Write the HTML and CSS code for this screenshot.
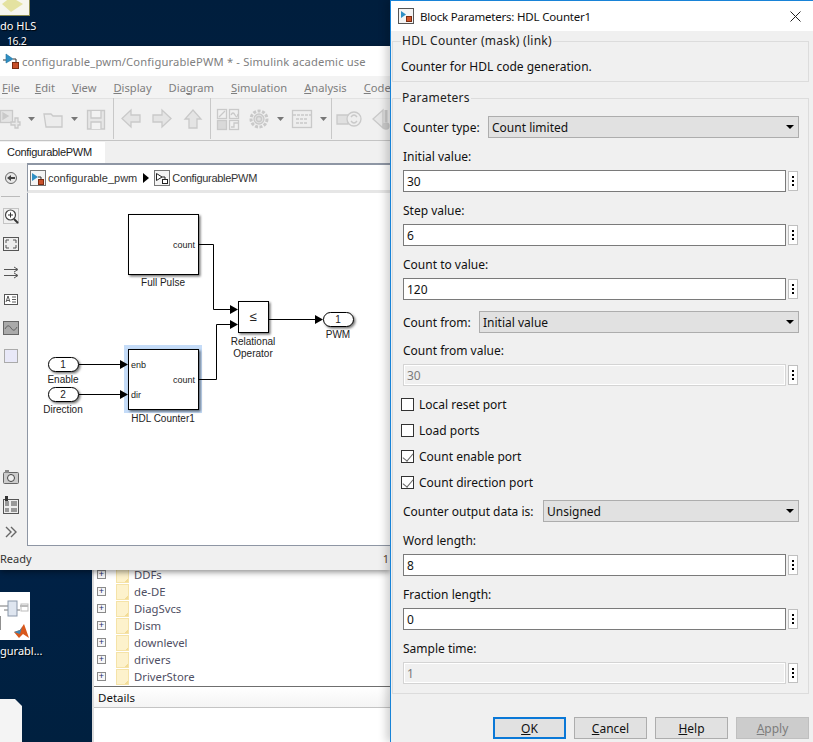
FILE: index.html
```html
<!DOCTYPE html>
<html lang="en">
<head>
<meta charset="utf-8">
<title>Block Parameters: HDL Counter1</title>
<link rel="stylesheet" href="styles.css">
</head>
<body>
<main class="desktop">
  <div class="desk-top-icon">
    <svg width="29" height="15" viewBox="0 0 29 15">
      <rect width="29" height="15" fill="#f6f6ee"/>
      <path d="M2 4L11 -3L23 4L11 12Z" fill="#e4e2a0"/>
    </svg>
  </div>
  <div class="desk-label desk-label-a">do HLS</div>
  <div class="desk-label desk-label-b">16.2</div>

  <div class="desk-file">
    <svg width="30" height="48" viewBox="0 0 30 48">
      <rect width="30" height="48" fill="#fff"/>
      <path d="M0 14H8M20 14H28M4 18H20" stroke="#777" fill="none"/>
      <rect x="8" y="9" width="9" height="15" fill="#dfe6f0" stroke="#8a97aa"/>
      <rect x="21" y="12" width="7" height="7" fill="none" stroke="#bbb"/>
      <path d="M0 24V38" stroke="#222" stroke-width="1"/>
      <path d="M14 40L20 38L24 32L29 46L23 42L19 46Z" fill="#d9581c"/>
      <path d="M14 40L20 38L22 35L20 42Z" fill="#3f87b5"/>
    </svg>
  </div>
  <div class="desk-label desk-label-c">gurabl...</div>
  <div class="desk-doc"></div>

  <section class="explorer">
    <div class="tree-pane">
      <ul class="tree">
        <li class="tree-row"><span class="plus">+</span><span class="folder"></span>DDFs</li>
        <li class="tree-row"><span class="plus">+</span><span class="folder"></span>de-DE</li>
        <li class="tree-row"><span class="plus">+</span><span class="folder"></span>DiagSvcs</li>
        <li class="tree-row"><span class="plus">+</span><span class="folder"></span>Dism</li>
        <li class="tree-row"><span class="plus">+</span><span class="folder"></span>downlevel</li>
        <li class="tree-row"><span class="plus">+</span><span class="folder"></span>drivers</li>
        <li class="tree-row"><span class="plus">+</span><span class="folder"></span>DriverStore</li>
      </ul>
    </div>
    <div class="details">Details</div>
  </section>

  <section class="simulink">
    <header class="sim-title">
      <svg class="sim-logo" width="18" height="18" viewBox="0 0 18 18">
        <path d="M1 9H4" stroke="#333"/>
        <path d="M4 3L11 8L4 12Z" fill="#2f8fc4" stroke="#1d6e9c" stroke-width=".6"/>
        <path d="M11 8H14V11" stroke="#333" fill="none"/>
        <rect x="10.500" y="11.500" width="6" height="6" fill="#c8502a" stroke="#7a2c12"/>
      </svg>
      <span>configurable_pwm/ConfigurablePWM * - Simulink academic use</span>
    </header>
    <nav class="menu">
      <span><u>F</u>ile</span><span><u>E</u>dit</span><span><u>V</u>iew</span><span><u>D</u>isplay</span><span>Dia<u>g</u>ram</span><span><u>S</u>imulation</span><span><u>A</u>nalysis</span><span><u>C</u>ode</span>
    </nav>
    <div class="toolbar">
      <svg width="390" height="42" viewBox="0 98 390 42">
        <g fill="none" stroke="#c9c9c9" stroke-width="1.300">
          <rect x="0.500" y="110.500" width="12" height="12" fill="#e4e4e4"/>
          <path d="M3 113L8 116L3 119Z" fill="#c9c9c9"/>
          <path d="M11 122H15V118H18V122H20V125H18V128H15V125H11Z" fill="#e9e9e9"/>
          <path d="M44 114H51L53 116H62V127H46Z" fill="#ececec"/>
          <path d="M87.500 110.500H104.500V129H87.500Z" fill="#e6e6e6"/>
          <path d="M91 111V118H101V111M91 129V122H101V129" fill="#f2f2f2"/>
          <path d="M140 115H131V110L122 118.500L131 127V122H140Z" fill="#e4e4e4"/>
          <path d="M153 115H162V110L171 118.500L162 127V122H153Z" fill="#e4e4e4"/>
          <path d="M189 128V119H185L193 110L201 119H197V128Z" fill="#e4e4e4"/>
          <rect x="217.500" y="109.500" width="9" height="9"/>
          <rect x="229.500" y="109.500" width="9" height="9"/>
          <rect x="217.500" y="120.500" width="9" height="9" fill="#d9d9d9"/>
          <rect x="229.500" y="120.500" width="9" height="9"/>
          <path d="M219 117L225 111M231 115Q233 111 235 115T238 114M231 127H234V123H238"/>
          <circle cx="259" cy="119" r="8" stroke-width="3" stroke-dasharray="3 1.500"/>
          <circle cx="259" cy="119" r="5" fill="#e2e2e2"/>
          <circle cx="259" cy="119" r="2.500"/>
          <rect x="292.500" y="110.500" width="19" height="17" fill="#eee"/>
          <path d="M293 115H311M296 119H308M296 123H308" stroke-dasharray="3 1"/>
          <path d="M337 115H348V124H337Z" fill="#e0e0e0"/>
          <circle cx="354" cy="119" r="7" fill="#eee"/>
          <path d="M351 117Q354 113 357 117M357 121Q354 125 351 121"/>
          <path d="M383 110L373 119L383 128Z" fill="#e6e6e6"/>
          <path d="M386 110V122" stroke-width="3"/>
          <circle cx="386" cy="126" r="3" fill="#ccc"/>
        </g>
        <path d="M28 117H35L31.500 121ZM71 117H78L74.500 121ZM277 117H284L280.500 121ZM320 117H327L323.500 121Z" fill="#777"/>
        <path d="M113.500 98V139M210.500 98V139M331.500 98V139" stroke="#c8c8c8"/>
      </svg>
    </div>
    <div class="tabs"><span class="tab">ConfigurablePWM</span></div>
    <div class="workspace">
      <aside class="palette">
        <svg width="27" height="380" viewBox="0 163 27 380">
          <circle cx="11" cy="178" r="5.500" fill="#e8e8e8" stroke="#666"/>
          <path d="M7 178L11 175V177H15V179H11V181Z" fill="#444"/>
          <path d="M1 196.500H20" stroke="#bbb"/>
          <rect x="3.500" y="208.500" width="15" height="15" fill="none" stroke="#999" stroke-dasharray="1 1"/>
          <circle cx="10.500" cy="215" r="5" fill="#fff" stroke="#444" stroke-width="1.200"/>
          <path d="M14 219L18 223" stroke="#333" stroke-width="2"/>
          <path d="M8 215H13M10.500 212.500V217.500" stroke="#333"/>
          <rect x="3.500" y="237.500" width="15" height="13" fill="#eee" stroke="#555"/>
          <path d="M6 240H9M6 240V243M16 240H13M16 240V243M6 248H9M6 248V245M16 248H13M16 248V245" stroke="#555"/>
          <path d="M4 269.500H17M4 275.500H17" stroke="#555"/>
          <path d="M14 267L18 269.500L14 272M14 273L18 275.500L14 278" fill="none" stroke="#555"/>
          <rect x="4.500" y="294.500" width="13" height="10" fill="#fff" stroke="#555"/>
          <path d="M6 302L8 296L10 302M7 300.500H9M12 297H16M12 299.500H16M12 302H16" stroke="#333" fill="none" stroke-width=".8"/>
          <rect x="3.500" y="321.500" width="15" height="13" fill="#aaa" stroke="#666"/>
          <path d="M5 329Q8 323 11 328T17 327" fill="none" stroke="#666"/>
          <rect x="4.500" y="349.500" width="13" height="13" fill="#e8e8f8" stroke="#aaa"/>
          <rect x="3.500" y="472.500" width="15" height="11" rx="1" fill="#ccc" stroke="#666"/>
          <rect x="5" y="470" width="4" height="3" fill="#888"/>
          <circle cx="11" cy="478" r="3.500" fill="#eee" stroke="#444"/>
          <rect x="3.500" y="499.500" width="15" height="14" fill="#eee" stroke="#555"/>
          <rect x="5" y="496" width="3" height="10" fill="#333"/>
          <path d="M5 501H9V506H5ZM11 501H17V506H11ZM5 508H9V512H5ZM11 508H17V512H11Z" fill="#999"/>
          <path d="M6 527L11 532L6 537M11 527L16 532L11 537" fill="none" stroke="#666" stroke-width="1.400"/>
        </svg>
      </aside>
      <div class="main-col">
        <div class="crumbs">
          <span class="crumb-icon">
            <svg width="16" height="16" viewBox="0 0 16 16">
              <path d="M2 3L8 7L2 11Z" fill="#2f8fc4"/>
              <path d="M8 7H11V9" stroke="#333" fill="none"/>
              <rect x="8.500" y="9.500" width="5" height="5" fill="#c8502a" stroke="#7a2c12"/>
            </svg>
          </span>
          <span class="crumb-text">configurable_pwm</span>
          <span class="crumb-arrow"></span>
          <span class="crumb-icon">
            <svg width="16" height="16" viewBox="0 0 16 16">
              <path d="M2.500 3.500L8 7L2.500 10.500Z" fill="#fff" stroke="#222"/>
              <path d="M8 7H11V9" stroke="#222" fill="none"/>
              <rect x="8.500" y="9.500" width="5" height="4" fill="#fff" stroke="#222"/>
            </svg>
          </span>
          <span class="crumb-text crumb-last">ConfigurablePWM</span>
        </div>
        <div class="canvas">
          <svg class="diagram" width="362" height="352" viewBox="28 193 362 352">
            <defs>
              <filter id="shadow" x="-10%" y="-10%" width="130%" height="130%">
                <feDropShadow dx="1.500" dy="1.500" stdDeviation="1" flood-color="#000" flood-opacity=".55"/>
              </filter>
            </defs>
            <rect class="selection" x="124" y="345" width="78" height="68"/>
            <rect class="block" x="128.500" y="214.500" width="70" height="60"/>
            <rect class="block" x="128.500" y="349.500" width="70" height="60"/>
            <rect class="block" x="238.500" y="301.500" width="30" height="31"/>
            <rect class="block" x="323.500" y="312.500" width="30" height="14" rx="7"/>
            <rect class="block" x="48.500" y="357.500" width="30" height="14" rx="7"/>
            <rect class="block" x="48.500" y="387.500" width="30" height="14" rx="7"/>
            <path class="wire" d="M199 244.500H213.500V309.500H231M199 379.500H216.500V324.500H231M269 319.500H316M79 364.500H121M79 394.500H121"/>
            <path class="head" d="M230 305L238 309.500L230 314ZM230 320L238 324.500L230 329ZM315 315L323 319.500L315 324ZM120 360L128 364.500L120 369ZM120 390L128 394.500L120 399Z"/>
            <text class="lbl port end" x="195" y="247.500">count</text>
            <text class="lbl mid" x="163" y="286">Full Pulse</text>
            <text class="lbl port" x="131" y="367.500">enb</text>
            <text class="lbl port" x="131" y="397.500">dir</text>
            <text class="lbl port end" x="195" y="382.500">count</text>
            <text class="lbl mid" x="163" y="421.500">HDL Counter1</text>
            <text class="lbl op mid" x="253" y="321">≤</text>
            <text class="lbl mid" x="253" y="344.500">Relational</text>
            <text class="lbl mid" x="253" y="356.500">Operator</text>
            <text class="lbl mid" x="338" y="323">1</text>
            <text class="lbl mid" x="338" y="338">PWM</text>
            <text class="lbl mid" x="63" y="368">1</text>
            <text class="lbl mid" x="63" y="383">Enable</text>
            <text class="lbl mid" x="63" y="398">2</text>
            <text class="lbl mid" x="63" y="413">Direction</text>
          </svg>
        </div>
      </div>
    </div>
    <footer class="status"><span>Ready</span><span class="status-right">1</span></footer>
  </section>

  <section class="dialog">
    <header class="dlg-title">
      <svg class="dlg-logo" width="16" height="16" viewBox="0 0 16 16">
        <rect x=".5" y=".5" width="15" height="15" fill="#f4f4f4" stroke="#555"/>
        <path d="M3 3L8 6.500L3 10Z" fill="#2f8fc4"/>
        <rect x="8.500" y="8.500" width="5" height="5" fill="#d0552a" stroke="#7a2c12"/>
      </svg>
      <span class="dlg-title-text">Block Parameters: HDL Counter1</span>
      <svg class="dlg-close" width="11" height="11" viewBox="0 0 11 11">
        <path d="M.5 .5L10.500 10.500M10.500 .5L.5 10.500" stroke="#222" fill="none"/>
      </svg>
    </header>
    <div class="dlg-body">
      <fieldset class="group group-desc">
        <legend>HDL Counter (mask) (link)</legend>
        <p class="desc">Counter for HDL code generation.</p>
      </fieldset>
      <fieldset class="group group-params">
        <legend>Parameters</legend>
        <div class="row row-type"><span>Counter type:</span><div class="combo">Count limited</div></div>
        <div class="field"><label>Initial value:</label><div class="input-line"><div class="input">30</div><span class="dots"></span></div></div>
        <div class="field"><label>Step value:</label><div class="input-line"><div class="input">6</div><span class="dots"></span></div></div>
        <div class="field"><label>Count to value:</label><div class="input-line"><div class="input">120</div><span class="dots"></span></div></div>
        <div class="row row-from"><span>Count from:</span><div class="combo">Initial value</div></div>
        <div class="field field-after-from"><label>Count from value:</label><div class="input-line"><div class="input disabled">30</div><span class="dots"></span></div></div>
        <div class="check check-first"><span class="box"></span>Local reset port</div>
        <div class="check"><span class="box"></span>Load ports</div>
        <div class="check"><span class="box checked"></span>Count enable port</div>
        <div class="check"><span class="box checked"></span>Count direction port</div>
        <div class="row row-out"><span>Counter output data is:</span><div class="combo">Unsigned</div></div>
        <div class="field"><label>Word length:</label><div class="input-line"><div class="input">8</div><span class="dots"></span></div></div>
        <div class="field"><label>Fraction length:</label><div class="input-line"><div class="input">0</div><span class="dots"></span></div></div>
        <div class="field"><label>Sample time:</label><div class="input-line"><div class="input disabled">1</div><span class="dots"></span></div></div>
      </fieldset>
      <div class="buttons">
        <button class="btn default"><u>O</u>K</button>
        <button class="btn"><u>C</u>ancel</button>
        <button class="btn"><u>H</u>elp</button>
        <button class="btn off"><u>A</u>pply</button>
      </div>
    </div>
  </section>
</main>
</body>
</html>
```
FILE: styles.css
```css
* { box-sizing: border-box; }
html, body { margin: 0; padding: 0; }
body { width: 813px; height: 742px; overflow: hidden; font-family: "Noto Sans", "Open Sans", sans-serif; font-size: 12px; color: #111; }

.desktop { position: relative; width: 813px; height: 742px; overflow: hidden; background: linear-gradient(180deg, #001e3d 0%, #00224a 60%, #00203f 100%); }
.desk-top-icon { position: absolute; left: 0; top: 0; width: 30px; height: 16px; border-right: 1px solid #8c8c50; border-bottom: 1px solid #8c8c50; }
.desk-top-icon svg { display: block; }
.desk-label { position: absolute; color: #fff; font-size: 11px; line-height: 16px; text-shadow: 1px 1px 1px #000; white-space: nowrap; }
.desk-label-a { left: 0; top: 18px; }
.desk-label-b { left: 7px; top: 33px; font-size: 10.500px; letter-spacing: -.4px; }
.desk-label-c { left: 0; top: 643px; }
.desk-file { position: absolute; left: 0; top: 592px; width: 30px; height: 48px; }
.desk-file svg { display: block; }
.desk-doc { position: absolute; left: 0; top: 699px; width: 22px; height: 43px; background: #f4f4f4; clip-path: polygon(0 0, 15px 0, 22px 7px, 22px 100%, 0 100%); }

.explorer { position: absolute; left: 92px; top: 570px; width: 298px; height: 172px; background: #fff; border-left: 2px solid #dcdcdc; display: flex; flex-direction: column; }
.tree-pane { height: 116px; flex: none; overflow: hidden; }
.tree { list-style: none; margin: -4px 0 0; padding: 0; }
.tree-row { display: flex; align-items: center; height: 17px; color: #4f4f63; font-size: 11.300px; }
.plus { width: 9px; height: 9px; margin-left: 3px; border: 1px solid #8a8a8a; color: #1d2f6b; font: 9px/7px "Liberation Sans", sans-serif; text-align: center; background: #f7f7f7; }
.folder { width: 13px; height: 16px; margin: 0 5px 0 10px; background: linear-gradient(135deg, #fdf2cc 88%, #f3dc96 88%); border: 1px solid #f5e3a8; }
.details { height: 22px; line-height: 22px; padding-left: 4px; border-top: 1px solid #6e6e6e; border-bottom: 1px solid #c4c4c4; background: linear-gradient(#fff, #f4f4f4); color: #111; font-size: 11.500px; }

.simulink { position: absolute; left: 0; top: 46px; width: 390px; height: 524px; background: #f0f0f0; box-shadow: 0 2px 6px rgba(0, 0, 0, .45); display: flex; flex-direction: column; overflow: hidden; }
.sim-title { height: 30px; flex: none; background: #fff; display: flex; align-items: center; padding-left: 2px; color: #808080; font-size: 11.200px; gap: 2px; letter-spacing: .16px; white-space: nowrap; }
.sim-logo { flex: none; margin-top: -3px; }
.menu { height: 22px; flex: none; background: #f3f3f3; display: flex; align-items: center; padding-left: 2px; gap: 17px; color: #7e7e7e; font-size: 11.200px; white-space: nowrap; }
.menu span:first-child { margin-right: -2px; }
.toolbar { height: 42px; flex: none; background: #f0f0f0; border-top: 1px solid #e2e2e2; }
.toolbar svg { display: block; margin-top: -1px; }
.tabs { height: 23px; flex: none; background: #f0f0f0; border-top: 1px solid #c4c4c4; display: flex; align-items: flex-end; }
.tab { height: 21px; width: 105px; padding-left: 7px; background: #fff; color: #222; font: 11px/21px "Liberation Sans", sans-serif; letter-spacing: -.3px; }
.workspace { flex: 1; display: flex; min-height: 0; }
.palette { width: 27px; flex: none; background: #f0f0f0; }
.palette svg { display: block; }
.main-col { flex: 1; min-width: 0; display: flex; flex-direction: column; }
.crumbs { height: 30px; flex: none; background: #fff; border-top: 2px solid #8e96a4; border-bottom: 3px solid #e6e6e6; border-left: 1px solid #8e96a4; display: flex; align-items: center; padding-left: 2px; color: #333; font: 11px "Liberation Sans", sans-serif; white-space: nowrap; }
.crumb-icon { width: 16px; height: 16px; flex: none; background: #f4f4f4; outline: 1px solid #777; outline-offset: -1px; }
.crumb-icon svg { display: block; }
.crumb-text { margin-left: 2px; }
.crumb-last { letter-spacing: -.3px; }
.crumb-arrow { width: 0; height: 0; margin: 0 5px 0 6px; border-left: 6px solid #000; border-top: 5px solid transparent; border-bottom: 5px solid transparent; }
.canvas { height: 353px; flex: none; background: #fff; border-left: 1px solid #8e96a4; border-bottom: 1px solid #8e96a4; overflow: hidden; }
.diagram { display: block; }
.selection { fill: #c5dcf8; }
.block { fill: #fff; stroke: #000; filter: url(#shadow); }
.wire { fill: none; stroke: #000; }
.head { fill: #000; }
.lbl { font-family: "Liberation Sans", Arial, sans-serif; font-size: 10px; fill: #222; }
.port { font-size: 9px; }
.op { font-size: 13px; }
.end { text-anchor: end; }
.mid { text-anchor: middle; }
.status { height: 24px; flex: none; background: #f0f0f0; display: flex; justify-content: space-between; align-items: center; color: #333; font-size: 11px; padding-right: 1px; }
.status-right { color: #5c4630; }

.dialog { position: absolute; left: 390px; top: 0; width: 423px; height: 742px; background: #f0f0f0; border-left: 1px solid #1883d7; border-top: 1px solid #1883d7; box-shadow: -4px 0 8px rgba(0, 0, 0, .18); display: flex; flex-direction: column; }
.dlg-title { height: 30px; flex: none; background: #fff; display: flex; align-items: center; padding-left: 7px; }
.dlg-title-text { margin-left: 6px; flex: 1; font-size: 11.500px; letter-spacing: -.2px; }
.dlg-close { margin-right: 12px; }
.dlg-body { flex: 1; padding: 0 4px 0 1px; display: flex; flex-direction: column; }
.group { margin: 0; border: 1px solid #dcdcdc; min-width: 0; }
.group legend { padding: 0 1px; line-height: 16px; color: #222; letter-spacing: .25px; }
.group-desc { height: 49px; margin-top: 2px; padding: 0 8px; }
.group-desc legend { margin-left: 0; }
.desc { margin: 10px 0 0; line-height: 16px; }
.group-params { height: 604px; margin-top: 8px; padding: 0 9px 0 10px; }
.group-params legend { margin-left: -2px; }
.row { display: flex; align-items: center; height: 22px; }
.row > span { flex: none; white-space: nowrap; }
.row-type { margin-top: 10px; }
.row-type > span { width: 85px; }
.row-from { margin-top: 11px; }
.row-from > span { width: 76px; }
.row-out { margin-top: 5px; }
.row-out > span { width: 140px; }
.combo { flex: 1; height: 22px; background: #e1e1e1; border: 1px solid #adadad; line-height: 21px; padding-left: 3px; position: relative; }
.combo::after { content: ""; position: absolute; right: 4px; top: 8px; border-left: 4px solid transparent; border-right: 4px solid transparent; border-top: 4px solid #000; }
.field { padding-top: 9px; height: 54px; }
.field label { display: block; height: 20px; line-height: 20px; margin-bottom: 3px; }
.field-after-from { padding-top: 8px; height: 53px; }
.input-line { display: flex; align-items: center; gap: 2px; }
.input { width: 383px; height: 22px; background: #fff; border: 1px solid #7a7a7a; line-height: 21px; padding-left: 3px; color: #111; }
.input.disabled { background: #f0f0f0; border: 1px solid #d4d4d4; box-shadow: inset 0 0 0 1px #fff; color: #7b7b7b; }
.dots { width: 10px; height: 20px; border: 1px solid #c0c0c0; background: #fff; position: relative; }
.dots::before { content: ""; position: absolute; left: 3px; top: 8px; width: 2px; height: 2px; background: #000; box-shadow: 0 -4px 0 #000, 0 4px 0 #000; }
.check { display: flex; align-items: center; height: 26px; }
.check-first { margin-top: 5px; }
.box { width: 13px; height: 13px; border: 1px solid #333; background: #fff; margin-right: 5px; margin-left: -2px; position: relative; }
.box.checked::after { content: ""; position: absolute; left: 3px; top: 0; width: 5px; height: 9px; border-right: 1.500px solid #666; border-bottom: 1.500px solid #666; transform: rotate(40deg); }
.buttons { display: flex; justify-content: flex-end; gap: 8px; margin-top: 23px; }
.btn { width: 73px; height: 22px; padding: 0; background: #e1e1e1; border: 1px solid #adadad; font: inherit; color: #111; }
.btn.default { border: 2px solid #0a78d7; }
.btn.off { background: #cccccc; border-color: #bfbfbf; color: #7c7c7c; }
```
